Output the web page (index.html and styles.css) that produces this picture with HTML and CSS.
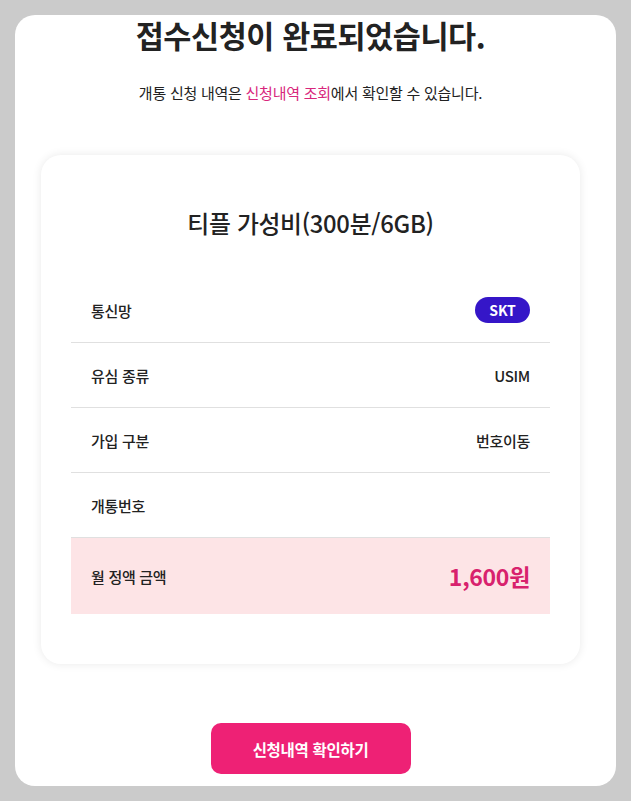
FILE: index.html
```html
<!DOCTYPE html>
<html lang="ko">
<head>
<meta charset="utf-8">
<title>접수신청 완료</title>
<link rel="stylesheet" href="styles.css">
</head>
<body>
<main class="panel">
  <h1 class="title">접수신청이 완료되었습니다.</h1>
  <p class="subtitle">개통 신청 내역은 <span class="link">신청내역 조회</span>에서 확인할 수 있습니다.</p>

  <section class="card">
    <h2 class="plan">티플 가성비(300분/6GB)</h2>
    <div class="rows">
      <div class="row">
        <span class="label">통신망</span>
        <span class="badge">SKT</span>
      </div>
      <div class="row">
        <span class="label">유심 종류</span>
        <span class="value">USIM</span>
      </div>
      <div class="row">
        <span class="label">가입 구분</span>
        <span class="value">번호이동</span>
      </div>
      <div class="row">
        <span class="label">개통번호</span>
        <span class="value"></span>
      </div>
      <div class="row row-price">
        <span class="label">월 정액 금액</span>
        <span class="price">1,600원</span>
      </div>
    </div>
  </section>

  <div class="actions">
    <button class="btn" type="button">신청내역 확인하기</button>
  </div>
</main>
</body>
</html>
```

FILE: styles.css
```css
* { box-sizing: border-box; }

html, body {
  margin: 0;
  padding: 0;
}

body {
  background: #cbcbcb;
  font-family: "Noto Sans CJK KR", "Noto Sans", sans-serif;
  color: #222;
  padding: 15px;
}

.panel {
  background: #fff;
  border-radius: 20px;
  width: 601px;
  height: 771px;
  padding: 0 36px 12px 26px;
  display: flex;
  flex-direction: column;
}

.title {
  margin: 0;
  text-align: center;
  font-size: 30.5px;
  line-height: 40px;
  font-weight: 700;
  letter-spacing: -0.4px;
  color: #222;
}

.subtitle {
  margin: 28px 0 0;
  text-align: center;
  font-size: 15px;
  line-height: 20px;
  font-weight: 400;
  letter-spacing: -0.25px;
  color: #222;
}

.link {
  color: #d8267c;
}

.card {
  margin-top: 52px;
  background: #fff;
  border-radius: 20px;
  box-shadow: 0 0 10px rgba(0, 0, 0, 0.09);
  padding: 53px 30px 50px;
}

.plan {
  margin: 0;
  text-align: center;
  font-size: 23.8px;
  line-height: 30px;
  font-weight: 500;
  letter-spacing: -0.3px;
  color: #222;
}

.rows {
  margin-top: 40px;
  display: flex;
  flex-direction: column;
}

.row {
  height: 65px;
  display: flex;
  align-items: center;
  justify-content: space-between;
  padding: 0 20px;
  border-bottom: 1px solid #e0e0e0;
}

.label {
  font-size: 15px;
  font-weight: 500;
  color: #222;
  letter-spacing: -0.3px;
}

.value {
  font-size: 15px;
  font-weight: 500;
  color: #222;
  letter-spacing: -0.3px;
}

.badge {
  display: inline-flex;
  align-items: center;
  justify-content: center;
  width: 55px;
  height: 26px;
  border-radius: 13px;
  background: #3516c8;
  color: #fff;
  font-size: 14px;
  font-weight: 700;
}

.row-price {
  height: 76px;
  border-bottom: none;
  background: #fde4e6;
}

.price {
  font-size: 23px;
  font-weight: 700;
  color: #d8216d;
  letter-spacing: -0.3px;
}

.actions {
  margin-top: auto;
  display: flex;
  justify-content: center;
}

.btn {
  width: 200px;
  height: 51px;
  border: none;
  border-radius: 10px;
  background: #ee2175;
  color: #fff;
  font-family: inherit;
  font-size: 15.5px;
  font-weight: 700;
  letter-spacing: -0.3px;
  cursor: pointer;
}
```
